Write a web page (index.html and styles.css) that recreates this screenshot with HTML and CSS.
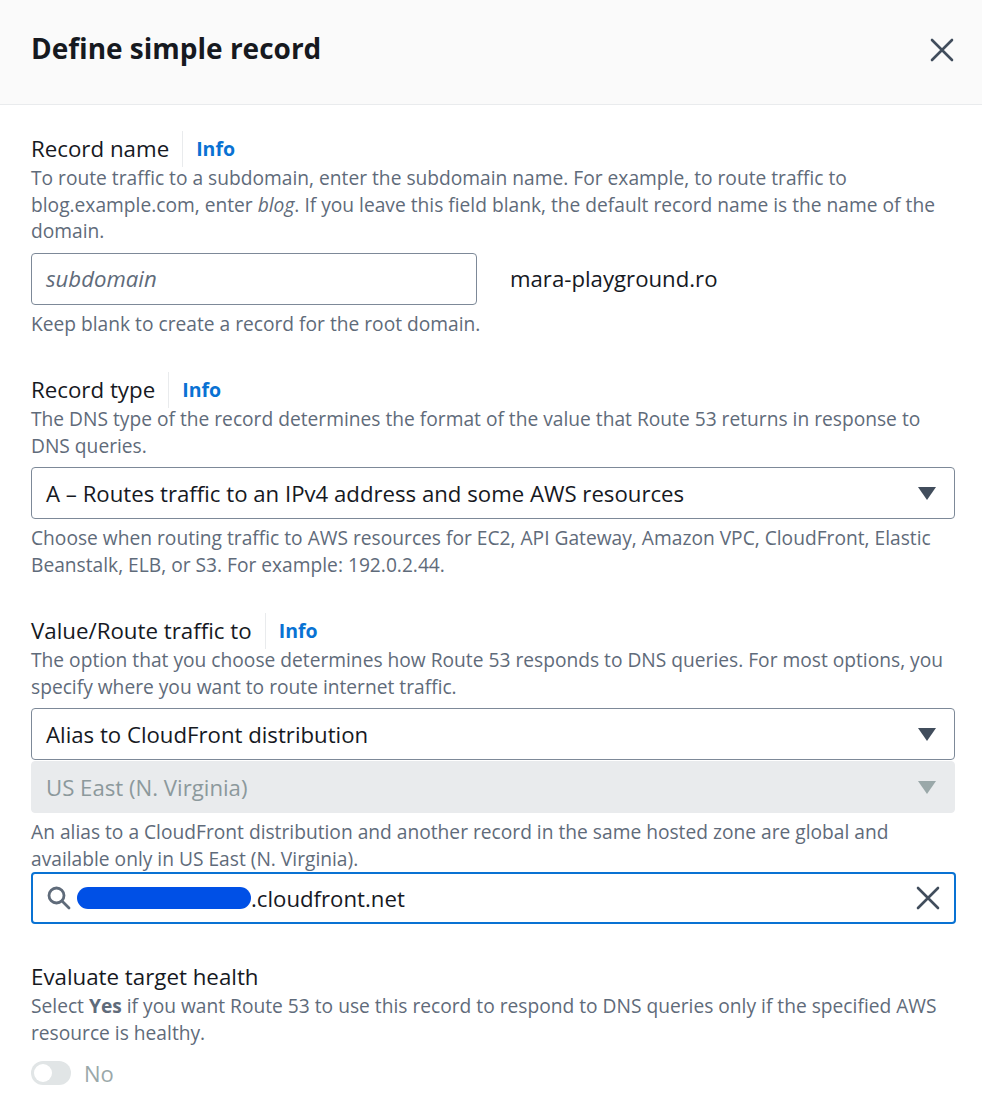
FILE: index.html
```html
<!DOCTYPE html>
<html lang="en">
<head>
<meta charset="utf-8">
<title>Define simple record</title>
<link rel="stylesheet" href="styles.css">
</head>
<body>
<div class="modal">
  <header class="modal-header">
    <h1 class="modal-title">Define simple record</h1>
    <button class="close-btn" aria-label="Close">
      <svg width="24" height="24" viewBox="0 0 24 24"><path d="M2 2 L22 22 M22 2 L2 22" stroke="#414d5c" stroke-width="2.6" fill="none" stroke-linecap="round"/></svg>
    </button>
  </header>
  <main class="modal-body">
    <section class="field field-first">
      <div class="label-row"><span class="label">Record name</span><span class="info">Info</span></div>
      <p class="desc">To route traffic to a subdomain, enter the subdomain name. For example, to route traffic to blog.example.com, enter <i>blog</i>. If you leave this field blank, the default record name is the name of the domain.</p>
      <div class="name-row">
        <div class="input name-input"><span class="placeholder">subdomain</span></div>
        <span class="domain">mara-playground.ro</span>
      </div>
      <p class="desc constraint">Keep blank to create a record for the root domain.</p>
    </section>

    <section class="field">
      <div class="label-row"><span class="label">Record type</span><span class="info">Info</span></div>
      <p class="desc">The DNS type of the record determines the format of the value that Route 53 returns in response to DNS queries.</p>
      <div class="input select"><span class="value">A – Routes traffic to an IPv4 address and some AWS resources</span><span class="caret"></span></div>
      <p class="desc constraint">Choose when routing traffic to AWS resources for EC2, API Gateway, Amazon VPC, CloudFront, Elastic Beanstalk, ELB, or S3. For example: 192.0.2.44.</p>
    </section>

    <section class="field">
      <div class="label-row"><span class="label">Value/Route traffic to</span><span class="info">Info</span></div>
      <p class="desc">The option that you choose determines how Route 53 responds to DNS queries. For most options, you specify where you want to route internet traffic.</p>
      <div class="input select"><span class="value">Alias to CloudFront distribution</span><span class="caret"></span></div>
      <div class="input select disabled"><span class="value">US East (N. Virginia)</span><span class="caret"></span></div>
      <p class="desc constraint">An alias to a CloudFront distribution and another record in the same hosted zone are global and available only in US East (N. Virginia).</p>
      <div class="input search">
        <svg class="search-icon" width="26" height="26" viewBox="0 0 26 26"><circle cx="10.5" cy="10.5" r="7.5" stroke="#5f6b7a" stroke-width="2.8" fill="none"/><path d="M16 16 L23 23" stroke="#5f6b7a" stroke-width="2.8" stroke-linecap="round"/></svg>
        <span class="value"><span class="redact"></span>.cloudfront.net</span>
        <svg class="clear-icon" width="24" height="24" viewBox="0 0 24 24"><path d="M2 2 L22 22 M22 2 L2 22" stroke="#414d5c" stroke-width="2.6" fill="none" stroke-linecap="round"/></svg>
      </div>
    </section>

    <section class="field">
      <div class="label-row"><span class="label">Evaluate target health</span></div>
      <p class="desc">Select <b>Yes</b> if you want Route 53 to use this record to respond to DNS queries only if the specified AWS resource is healthy.</p>
      <div class="toggle-row"><span class="toggle"><span class="knob"></span></span><span class="toggle-label">No</span></div>
    </section>
  </main>
</div>
</body>
</html>
```
FILE: styles.css
```css
* { box-sizing: border-box; }
html, body { margin: 0; padding: 0; background: #ffffff; }
body {
  font-family: "Open Sans", "Noto Sans", sans-serif;
  color: #16191f;
  width: 982px;
  height: 1116px;
  overflow: hidden;
}
.modal-header {
  height: 105px;
  background: #fafafa;
  border-bottom: 1px solid #e9ebed;
  display: flex;
  align-items: center;
  justify-content: space-between;
  padding: 0 28px 0 31px;
}
.modal-title {
  margin: 0;
  font-size: 28px;
  font-weight: 700;
  color: #16191f;
  position: relative;
  top: -4px;
}
.close-btn {
  background: none;
  border: 0;
  padding: 0;
  width: 24px;
  height: 24px;
  display: flex;
  position: relative;
  top: -2px;
}
.modal-body {
  padding: 31px 27px 0 31px;
  display: flex;
  flex-direction: column;
  gap: 40px;
}
.field { display: flex; flex-direction: column; }
.label-row {
  display: flex;
  align-items: center;
  height: 26px;
}
.label {
  font-size: 22.3px;
  color: #16191f;
  line-height: 26px;
}
.info {
  margin-left: 13px;
  padding-left: 13px;
  border-left: 1px solid #e9ebed;
  font-size: 19.5px;
  font-weight: 700;
  color: #0972d3;
  line-height: 36px;
}
.desc {
  margin: 3px 0 0;
  font-size: 19.2px;
  line-height: 26.5px;
  color: #5f6b7a;
}
.desc b { color: #5f6b7a; font-weight: 700; }
.constraint { margin-top: 6px; }
.input {
  height: 52px;
  border: 1px solid #7d8998;
  border-radius: 4px;
  display: flex;
  align-items: center;
  padding: 0 18px 0 14px;
  font-size: 22.2px;
  color: #16191f;
  margin-top: 8px;
}
.name-row { display: flex; align-items: center; margin-top: 8px; }
.name-input { width: 446px; margin-top: 0; }
.placeholder { font-style: italic; color: #5f6b7a; }
.domain { margin-left: 33px; font-size: 22.2px; color: #16191f; }
.select { width: 924px; justify-content: space-between; }
.caret {
  width: 0; height: 0;
  border-left: 9px solid transparent;
  border-right: 9px solid transparent;
  border-top: 13px solid #414d5c;
}
.select + .select { margin-top: 1px; }
.disabled {
  background: #e9ebed;
  border-color: #e9ebed;
  color: #8c999c;
}
.disabled .caret { border-top-color: #9aa8a9; }
.search {
  width: 925px;
  border: 2px solid #0972d3;
  margin-top: 0;
  padding: 0 14px 0 13px;
}
.search-icon { flex: none; margin-right: 5px; }
.search .value { flex: 1; display: flex; align-items: center; }
.redact {
  display: inline-block;
  width: 174px;
  height: 22px;
  background: #0050e6;
  border-radius: 11px;
}
.clear-icon { flex: none; }
.toggle-row { display: flex; align-items: center; margin-top: 12px; }
.toggle {
  width: 40px; height: 24px;
  border-radius: 12px;
  background: #e1e5e6;
  display: flex; align-items: center;
  padding: 0 3px;
}
.knob { width: 18px; height: 18px; border-radius: 50%; background: #ffffff; }
.toggle-label { margin-left: 13px; font-size: 22px; color: #9aa8a9; }
```
